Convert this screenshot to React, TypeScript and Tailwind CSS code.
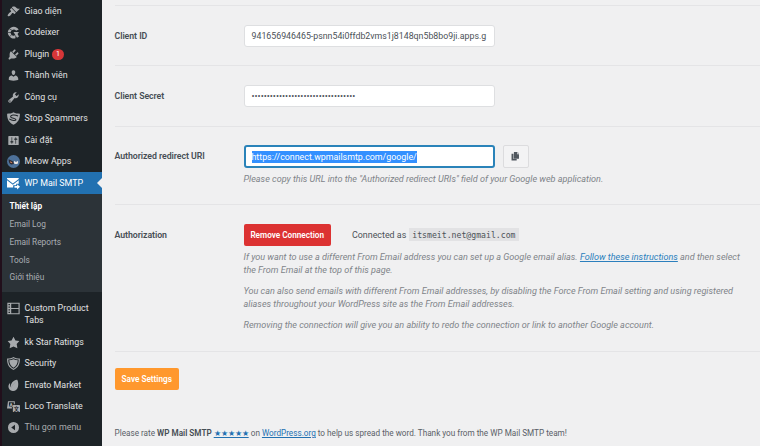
import React from "react";

type IconProps = { children: React.ReactNode; color?: string; box?: string };

function Glyph({ children, color = "#a7aaad", box = "0 0 20 20" }: IconProps) {
  return (
    <svg viewBox={box} className="block h-[13px] w-[13px] shrink-0" fill={color}>
      {children}
    </svg>
  );
}

const brush = (
  <Glyph>
    <path d="M14.48 11.06L7.41 3.99l1.5-1.5c.5-.56 2.3-.47 3.51.32 1.21.8 1.43 1.28 2.91 2.1 1.18.64 2.45 1.26 4.45.85zm-.71.71L6.7 4.7 4.93 6.47c-.39.39-.39 1.02 0 1.41l1.06 1.06c.39.39.39 1.03 0 1.42-.6.6-1.43 1.11-2.21 1.69-.35.26-.7.53-1.01.84C1.43 14.23.4 16.08 1.4 17.07c.99 1 2.84-.03 4.18-1.36.31-.31.58-.66.85-1.02.57-.78 1.08-1.61 1.69-2.21.39-.39 1.02-.39 1.41 0l1.06 1.06c.39.39 1.02.39 1.41 0z" />
  </Glyph>
);
const codeixer = (
  <Glyph>
    <path d="M18 5.5A9 9 0 1 0 13 18.800L13 14A4.600 4.600 0 1 1 14 7.400z" />
    <path d="M10 9.200h8.400l-2.200 3 2.200 4-3 2-2.600-4.400z" />
    <path d="M3 4l7 4M1.500 10h5M4 16.500l4-4" stroke="#1d2327" strokeWidth="1" fill="none" />
  </Glyph>
);
const plug = (
  <Glyph>
    <path d="M13.11 4.36L9.87 7.6 8 5.73l3.24-3.24c.35-.34 1.05-.2 1.56.32.52.51.66 1.21.31 1.55zm-8 1.77l.91-1.12 9.01 9.01-1.19.84c-.71.71-2.63 1.16-3.82 1.16H6.14L4.9 17.26c-.59.59-1.54.59-2.12 0-.59-.58-.59-1.53 0-2.12l1.24-1.24v-3.88c0-1.13.4-3.19 1.09-3.89zm7.26 3.97l3.24-3.24c.34-.35 1.04-.21 1.55.31.52.51.66 1.21.31 1.55l-3.24 3.25z" />
  </Glyph>
);
const user = (
  <Glyph>
    <path d="M10 9.25c-2.27 0-2.73-3.44-2.73-3.44C7 4.02 7.82 2 9.97 2c2.16 0 2.98 2.02 2.71 3.81 0 0-.41 3.44-2.68 3.44zm0 2.57L12.72 10c2.39 0 4.52 2.33 4.52 4.53v2.49s-3.65 1.13-7.24 1.13c-3.65 0-7.24-1.13-7.24-1.13v-2.49c0-2.25 1.94-4.48 4.47-4.48z" />
  </Glyph>
);
const wrench = (
  <Glyph>
    <path d="M16.68 9.77c-1.34 1.34-3.3 1.67-4.95.99l-5.41 6.52c-.99.99-2.59.99-3.58 0s-.99-2.59 0-3.57l6.52-5.42c-.68-1.65-.35-3.61.99-4.95 1.28-1.28 3.12-1.62 4.72-1.06l-2.89 2.89 2.82 2.82 2.86-2.87c.53 1.58.18 3.39-1.08 4.65zM3.81 16.21c.4.39 1.04.39 1.43 0 .4-.4.4-1.04 0-1.43-.39-.4-1.03-.4-1.43 0-.39.39-.39 1.03 0 1.43z" />
  </Glyph>
);
const spamShield = (
  <Glyph>
    <path d="M10 .5c3 1.700 6 2.200 9.800 2.200.3 8-2.800 13.300-9.800 17C3 16-.1 10.700.2 2.700 4 2.700 7 2.200 10 .5z" />
    <path d="M17 6C11 3.500 5.500 4.500 5.500 7.200c0 2.600 8.500 2.200 8.300 4.600-.2 2-5.800 1.600-10.300-1.300" fill="none" stroke="#1d2327" strokeWidth="1.600" />
  </Glyph>
);
const sliders = (
  <Glyph>
    <path d="M18 16V4c0-.55-.45-1-1-1H3c-.55 0-1 .45-1 1v12c0 .55.45 1 1 1h14c.55 0 1-.45 1-1zM8 11h1c.55 0 1 .45 1 1s-.45 1-1 1H8v1.500c0 .28-.22.5-.5.5s-.5-.22-.5-.5V13H6c-.55 0-1-.45-1-1s.45-1 1-1h1V5.500c0-.28.22-.5.5-.5s.5.22.5.5V11zm5-2h-1c-.55 0-1-.45-1-1s.45-1 1-1h1V5.500c0-.28.22-.5.5-.5s.5.22.5.5V7h1c.55 0 1 .45 1 1s-.45 1-1 1h-1v5.500c0 .28-.22.5-.5.5s-.5-.22-.5-.5V9z" />
  </Glyph>
);
const meow = (
  <Glyph>
    <circle cx="10" cy="10" r="10" fill="#4d7199" />
    <path d="M2.500 6.500l4 2 3 1.500 1.200 4-4 .5c-2.700-.5-4.200-3-4.200-8z" fill="#2c2a33" />
    <path d="M4.500 9.500l3.500 1.800v1.500l-2.800-1z" fill="#c87f5c" />
    <path d="M10.800 9l2 1.200h2l2-1.200.3 3.500-1.800 1.500h-3l-1.700-1.500z" fill="#e9e4e2" />
  </Glyph>
);
const mail = (
  <Glyph color="#fff">
    <path d="M0 1.500h18v1.500L9 10 0 3z" />
    <path d="M0 5l9 7 9-7v5.500h-3.800v2H9.500V16H0z" />
    <path d="M11.500 13.700h4v-2.600l4.500 4-4.500 4.200v-2.700h-4z" />
  </Glyph>
);
const tabs = (
  <Glyph>
    <path fillRule="evenodd" d="M.5 1h19v18H.5zM6.500 2.800v6.400h11.200V2.800zM6.500 10.900v6.300h11.200v-6.300zM2.300 3v2h2.200V3zM2.300 7v2h2.200V7zM2.300 11v2h2.200v-2zM2.300 15v2h2.200v-2z" />
  </Glyph>
);
const star = (
  <Glyph>
    <path d="M10 1l3 6 6 .75-4.120 4.620L16 19l-6-3-6 3 1.130-6.630L1 7.750 7 7z" />
  </Glyph>
);
const shield = (
  <Glyph>
    <path d="M10 0c3 1.800 6 2.300 9.800 2.300.4 8-2.200 14-9.800 17.700C2.400 16.300-.2 10.300.2 2.300 4 2.300 7 1.800 10 0z" />
    <path d="M10 1.800c2.600 1.300 5.200 1.800 8 1.900 0 6.300-2 11-8 14.300-6-3.300-8-8-8-14.300 2.800-.1 5.400-.6 8-1.900z" fill="#1d2327" />
    <path d="M10 3.300c2.200 1 4.200 1.400 6.500 1.600-.2 5.100-1.900 8.800-6.500 11.500-4.600-2.700-6.300-6.400-6.500-11.500 2.300-.2 4.300-.6 6.500-1.600z" />
  </Glyph>
);
const envato = (
  <Glyph>
    <path d="M15.500 1.300c1.300.9 2.600 6.200 1.300 11-1.200 4.300-4.500 6.700-8 6.300-4-.4-6.800-3.700-6.600-7.400.1-2 .9-3.400 1.800-4.400.5-.4 1 .1.8.8-.4 1.900 0 4 .9 5.100C5.200 6.800 11 .8 15.500 1.300z" />
    <path d="M13.500 4.500C9.700 7.500 7.300 10.700 6.100 14" fill="none" stroke="#8b8f93" strokeWidth=".7" />
  </Glyph>
);
const translate = (
  <Glyph>
    <path fillRule="evenodd" d="M1.500 2h10.500v4.500h-1.500v-3H3v7h4.500V13H0z" />
    <text x="3.300" y="10.500" fontSize="8.500" fontWeight="700" fontFamily="Roboto, sans-serif">A</text>
    <rect x="9" y="7.500" width="11" height="11" rx="1" />
    <text x="10.500" y="16.500" fontSize="8" fontWeight="700" fontFamily="'Noto Sans CJK SC', sans-serif" fill="#1d2327">文</text>
  </Glyph>
);
const collapse = (
  <Glyph>
    <path fillRule="evenodd" d="M10 1.500a8.500 8.500 0 1 0 0 17 8.500 8.500 0 0 0 0-17zM12.300 5.800v8.400L6.500 10z" />
  </Glyph>
);

type Item = { label: string; icon: React.ReactNode; active?: boolean; badge?: string };

const upper: Item[] = [
  { label: "Giao diện", icon: brush },
  { label: "Codeixer", icon: codeixer },
  { label: "Plugin", icon: plug, badge: "1" },
  { label: "Thành viên", icon: user },
  { label: "Công cụ", icon: wrench },
  { label: "Stop Spammers", icon: spamShield },
  { label: "Cài đặt", icon: sliders },
  { label: "Meow Apps", icon: meow },
  { label: "WP Mail SMTP", icon: mail, active: true },
];
const lower: Item[] = [
  { label: "kk Star Ratings", icon: star },
  { label: "Security", icon: shield },
  { label: "Envato Market", icon: envato },
  { label: "Loco Translate", icon: translate },
];

function MenuRow({ item }: { item: Item }) {
  return (
    <li
      className={
        item.active
          ? "relative flex h-[21.500px] items-center bg-[#2271b1] pl-[5px] text-white"
          : "flex h-[21.500px] items-center pl-[5px] text-[#e0e1e2]"
      }
    >
      {item.icon}
      <span className="ml-[4.500px] whitespace-nowrap pt-px">{item.label}</span>
      {item.badge && (
        <span className="ml-[3px] mt-px flex h-[11.500px] w-[11.500px] items-center justify-center rounded-full bg-[#d63638] text-[7px] leading-none text-white">
          {item.badge}
        </span>
      )}
      {item.active && (
        <span className="absolute right-0 top-[5.500px] border-y-[5px] border-r-[5px] border-y-transparent border-r-[#f0f0f1]" />
      )}
    </li>
  );
}

function Sidebar() {
  return (
    <nav className="h-full w-[102px] shrink-0 overflow-hidden border-l-2 border-[#210f1b] bg-[#1d2327] text-[8.900px] leading-[11.500px]">
      <ul className="pt-[0.400px]">
        {upper.map((i) => (
          <MenuRow key={i.label} item={i} />
        ))}
      </ul>
      <ul className="h-[98px] bg-[#2c3338] pl-[7.500px] pt-[4px] text-[8.300px] text-[#a9aeb3]">
        <li className="flex h-[18px] items-center font-bold text-white">Thiết lập</li>
        <li className="flex h-[17.800px] items-center">Email Log</li>
        <li className="flex h-[17.800px] items-center">Email Reports</li>
        <li className="flex h-[17.800px] items-center">Tools</li>
        <li className="flex h-[17.800px] items-center">Giới thiệu</li>
      </ul>
      <ul className="pt-[10.600px]">
        <li className="flex h-[29px] items-start pl-[5px] text-[#e0e1e2]">
          {tabs}
          <span className="ml-[4.500px] mt-px w-[72px]">Custom Product Tabs</span>
        </li>
        {lower.map((i) => (
          <MenuRow key={i.label} item={i} />
        ))}
        <li className="flex h-[20px] items-center pl-[5px] text-[#a7aaad]">
          {collapse}
          <span className="ml-[4.500px]">Thu gọn menu</span>
        </li>
      </ul>
    </nav>
  );
}

function Label({ children }: { children: React.ReactNode }) {
  return (
    <div className="w-[129px] shrink-0 pt-[5px] text-[8.750px] font-semibold tracking-[-0.050px] text-[#464d54]">
      {children}
    </div>
  );
}

export default function App() {
  return (
    <div className="flex h-[446px] w-[760px] overflow-hidden bg-[#f0f0f1] font-['Roboto',sans-serif] text-[8.900px] leading-[12px] text-[#4b5157]">
      <Sidebar />
      <main className="flex min-w-0 flex-1 flex-col pl-[12.500px]">
        <div className="h-[6px] shrink-0 border-b border-[#e4e4e6]" />
        <section className="flex h-[60px] shrink-0 border-b border-[#e4e4e6] pt-[19px]">
          <Label>Client ID</Label>
          <div className="flex h-[22px] w-[251px] items-center overflow-hidden whitespace-nowrap rounded-[3px] border border-[#dedfe1] bg-white pl-[7px] text-[8.810px]">
            941656946465-psnn54i0ffdb2vms1j8148qn5b8bo9ji.apps.g
          </div>
        </section>
        <section className="flex h-[61px] shrink-0 border-b border-[#e4e4e6] pt-[19px]">
          <Label>Client Secret</Label>
          <div className="flex h-[22px] w-[251px] items-center overflow-hidden whitespace-nowrap rounded-[3px] border border-[#dedfe1] bg-white pl-[7px] text-[9.060px]">
            ••••••••••••••••••••••••••••••••••
          </div>
        </section>
        <section className="flex h-[78px] shrink-0 border-b border-[#e4e4e6] pt-[18px]">
          <Label>Authorized redirect URI</Label>
          <div>
            <div className="flex">
              <div className="flex h-[23px] w-[251px] items-center whitespace-nowrap rounded-[3px] border-2 border-[#2a83b9] bg-white pl-[6px] text-[8.850px]">
                <span className="bg-[#3390ff] text-white">https://connect.wpmailsmtp.com/google/</span>
              </div>
              <div className="ml-[8px] flex h-[22.500px] w-[26px] items-center justify-center rounded-[2px] border border-[#dcdcde] bg-[#f3f3f4]">
                <svg viewBox="0 0 16 16" className="h-[8.500px] w-[8.500px]" fill="#50575e">
                  <path d="M5.500 0h6v4H15v8.500H5.500z" />
                  <path d="M12.300 0L15 3h-2.700z" />
                  <path d="M1 3.500h3.700v9.800h6V16H1z" />
                </svg>
              </div>
            </div>
            <p className="mt-[5px] whitespace-nowrap text-[9.070px] italic text-[#7f8489]">
              Please copy this URL into the "Authorized redirect URIs" field of your Google web application.
            </p>
          </div>
        </section>
        <section className="flex h-[147px] shrink-0 border-b border-[#e4e4e6] pt-[18.500px]">
          <Label>Authorization</Label>
          <div className="whitespace-nowrap">
            <div className="flex items-center">
              <div className="flex h-[22px] w-[87.500px] items-center justify-center rounded-[2px] bg-[#dc3232] text-[8.200px] font-semibold text-white">
                Remove Connection
              </div>
              <span className="ml-[21px]">Connected as</span>
              <span className="ml-[3px] flex h-[13px] items-center bg-[#e2e2e4] px-[3px] font-['DejaVu_Sans_Mono',monospace] text-[8.180px]">
                itsmeit.net@gmail.com
              </span>
            </div>
            <div className="mt-[5.500px] text-[9.070px] leading-[13.300px] italic text-[#7f8489]">
              <p>
                If you want to use a different From Email address you can set up a Google email alias.{" "}
                <span className="text-[#2b7fbd] underline">Follow these instructions</span> and then select
                <br />
                the From Email at the top of this page.
              </p>
              <p className="mt-[7.500px]">
                You can also send emails with different From Email addresses, by disabling the Force From Email setting and using registered
                <br />
                aliases throughout your WordPress site as the From Email addresses.
              </p>
              <p className="mt-[7.500px]">
                Removing the connection will give you an ability to redo the connection or link to another Google account.
              </p>
            </div>
          </div>
        </section>
        <div className="mt-[15.500px] flex h-[22px] w-[64.500px] shrink-0 items-center justify-center rounded-[2px] bg-[#ff982d] text-[8.200px] font-semibold text-white">
          Save Settings
        </div>
        <footer className="mt-[37.500px] whitespace-nowrap text-[8.190px] text-[#5a6067]">
          Please rate <b className="font-semibold text-[#464d54]">WP Mail SMTP</b>{" "}
          <span className="text-[#2271b1] underline">★★★★★</span> on{" "}
          <span className="text-[#2271b1] underline">WordPress.org</span> to help us spread the word. Thank you from the WP Mail SMTP team!
        </footer>
      </main>
    </div>
  );
}
